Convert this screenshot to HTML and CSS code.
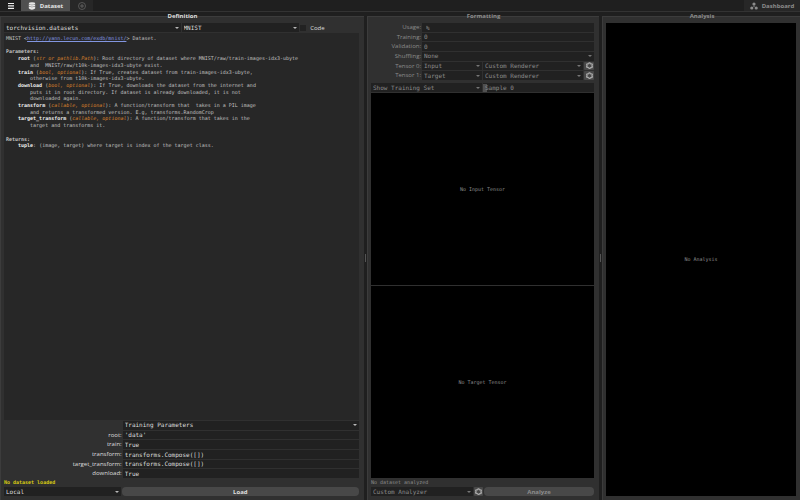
FILE: index.html
```html
<!DOCTYPE html>
<html lang="en">
<head>
<meta charset="utf-8">
<title>Dataset</title>
<link rel="stylesheet" href="styles.css">
</head>
<body>
<svg class="defs" aria-hidden="true">
  <symbol id="gear" viewBox="0 0 12 12">
    <path fill="none" stroke="currentColor" stroke-width="2" stroke-linejoin="round" d="M5 1.500h2l.4 1.300 1.400.7 1.400-.5 1 1.800-1 1v1.200l1 1-1 1.700-1.400-.4-1.400.7L7 11H5l-.4-1.200-1.400-.7-1.400.4-1-1.700 1-1V5.700l-1-1L1.800 3l1.400.5 1.400-.7z"/>
  </symbol>
</svg>

<header class="topbar">
  <button class="menu" type="button" aria-label="Menu">
    <svg viewBox="0 0 8 8"><path d="M1 1.500h6M1 3.900h6M1 6.300h6" stroke="currentColor" stroke-width="1.200"/></svg>
  </button>
  <button class="tab tab-active" type="button">
    <svg viewBox="0 0 8 8"><ellipse cx="4" cy="1.500" rx="3.200" ry="1.300"/><path d="M.8 2.300c1 1.200 5.400 1.200 6.400 0v1.400c-1 1.300-5.400 1.300-6.400 0zM.8 4.300c1 1.200 5.400 1.200 6.400 0v2c-1 1.900-5.400 1.900-6.400 0z"/></svg>
    Dataset
  </button>
  <button class="tab tab-add" type="button" aria-label="Add tab">
    <svg viewBox="0 0 8 8"><path d="M4 2v4M2 4h4" stroke="currentColor" stroke-width=".8"/><circle cx="4" cy="4" r="3.500" fill="none" stroke="currentColor" stroke-width=".7"/></svg>
  </button>
  <button class="tab tab-right" type="button">
    <svg viewBox="0 0 8 8"><circle cx="4" cy="2" r="1.600"/><circle cx="1.800" cy="6" r="1.600"/><circle cx="6.200" cy="6" r="1.600"/><path d="M4 2v2L2 6M4 4l2 2" fill="none" stroke="currentColor" stroke-width=".5"/></svg>
    Dashboard
  </button>
</header>

<main class="workspace">
  <section class="panel">
    <h2 class="title">Definition</h2>
    <div class="row pick">
      <span class="combo"><select aria-label="Module"><option>torchvision.datasets</option></select></span>
      <span class="combo"><select aria-label="Dataset"><option>MNIST</option></select></span>
      <label class="check"><input type="checkbox">Code</label>
    </div>
    <div class="doc">
      <div class="lines">
        <p>MNIST &lt;<a href="#">http://yann.lecun.com/exdb/mnist/</a>&gt; Dataset.</p>
        <p></p>
        <p><b class="head">Parameters:</b></p>
        <p>    <b>root</b> (<i>str or pathlib.Path</i>): Root directory of dataset where MNIST/raw/train-images-idx3-ubyte</p>
        <p>        and  MNIST/raw/t10k-images-idx3-ubyte exist.</p>
        <p>    <b>train</b> (<i>bool, optional</i>): If True, creates dataset from train-images-idx3-ubyte,</p>
        <p>        otherwise from t10k-images-idx3-ubyte.</p>
        <p>    <b>download</b> (<i>bool, optional</i>): If True, downloads the dataset from the internet and</p>
        <p>        puts it in root directory. If dataset is already downloaded, it is not</p>
        <p>        downloaded again.</p>
        <p>    <b>transform</b> (<i>callable, optional</i>): A function/transform that  takes in a PIL image</p>
        <p>        and returns a transformed version. E.g, transforms.RandomCrop</p>
        <p>    <b>target_transform</b> (<i>callable, optional</i>): A function/transform that takes in the</p>
        <p>        target and transforms it.</p>
        <p></p>
        <p><b class="head">Returns:</b></p>
        <p>    <b>tuple</b>: (image, target) where target is index of the target class.</p>
      </div>
    </div>
    <div class="params">
      <span></span>
      <span class="combo"><select aria-label="Parameter group"><option>Training Parameters</option></select></span>
      <label for="root">root:</label><input id="root" type="text" value="'data'">
      <label for="train">train:</label><input id="train" type="text" value="True">
      <label for="transform">transform:</label><input id="transform" type="text" value="transforms.Compose([])">
      <label for="target">target_transform:</label><input id="target" type="text" value="transforms.Compose([])">
      <label for="download">download:</label><input id="download" type="text" value="True">
    </div>
    <p class="status warn">No dataset loaded</p>
    <div class="row load">
      <span class="combo"><select aria-label="Location"><option>Local</option></select></span>
      <button class="action" type="button">Load</button>
    </div>
  </section>

  <div class="splitter"></div>

  <section class="panel dim">
    <h2 class="title">Formatting</h2>
    <div class="format">
      <label for="usage">Usage:</label><input id="usage" class="indent" type="text" value="%">
      <label for="training">Training:</label><input id="training" type="text" value="0">
      <label for="validation">Validation:</label><input id="validation" type="text" value="0">
      <label for="shuffling">Shuffling:</label>
      <span class="combo"><select id="shuffling"><option>None</option></select></span>
      <label for="tensor0">Tensor 0:</label>
      <div class="row tensor">
        <span class="combo"><select id="tensor0"><option>Input</option></select></span>
        <span class="combo"><select aria-label="Tensor 0 renderer"><option>Custom Renderer</option></select></span>
        <button class="gear" type="button" aria-label="Tensor 0 settings"><svg><use href="#gear"/></svg></button>
      </div>
      <label for="tensor1">Tensor 1:</label>
      <div class="row tensor">
        <span class="combo"><select id="tensor1"><option>Target</option></select></span>
        <span class="combo"><select aria-label="Tensor 1 renderer"><option>Custom Renderer</option></select></span>
        <button class="gear" type="button" aria-label="Tensor 1 settings"><svg><use href="#gear"/></svg></button>
      </div>
    </div>
    <div class="row halves">
      <span class="combo"><select aria-label="Shown set"><option>Show Training Set</option></select></span>
      <div class="slider"><input id="sample" type="range" min="0" max="100" value="0"><label for="sample">Sample 0</label></div>
    </div>
    <div class="views">
      <div class="view">No Input Tensor</div>
      <div class="view">No Target Tensor</div>
    </div>
    <p class="status">No dataset analyzed</p>
    <div class="row analyze">
      <span class="combo"><select aria-label="Analyzer"><option>Custom Analyzer</option></select></span>
      <button class="gear" type="button" aria-label="Analyzer settings"><svg><use href="#gear"/></svg></button>
      <button class="action" type="button">Analyze</button>
    </div>
  </section>

  <div class="splitter"></div>

  <section class="panel dim">
    <h2 class="title">Analysis</h2>
    <div class="views"><div class="view">No Analysis</div></div>
  </section>
</main>
</body>
</html>
```
FILE: styles.css
```css
:root {
  --mono: "DejaVu Sans Mono", "Liberation Mono", monospace;
  --sans: "Open Sans", "Noto Sans", sans-serif;
  --text: #dedede;
  --muted: #8c8c8c;
  --field: #212121;
  --panel: #303030;
}

* { box-sizing: border-box; }

body {
  margin: 0;
  height: 100vh;
  display: flex;
  flex-direction: column;
  overflow: hidden;
  background: #1f1f1f;
  color: var(--text);
  font: 6px/8px var(--sans);
}

p, h2 { margin: 0; }
.defs { display: none; }

button, input, select {
  margin: 0;
  padding: 0;
  border: 0;
  border-radius: 0;
  outline: 0;
  min-width: 0;
  color: inherit;
  font: inherit;
}

/* Top bar */
.topbar {
  display: flex;
  height: 12px;
  flex: none;
  border-bottom: 1px solid #333;
}

.topbar button {
  display: flex;
  align-items: center;
  justify-content: center;
  gap: 4px;
  background: none;
}

.topbar svg { width: 8px; height: 8px; fill: currentColor; }
.topbar .menu { width: 21px; color: #f0f0f0; }
.topbar .tab { background: #272727; font-weight: 700; }
.topbar .tab-active { width: 49px; background: #505050; color: #e6e6e6; }
.topbar .tab-add { width: 23px; color: #6a6a6a; }
.topbar .tab-right { width: 56px; margin-left: auto; color: #8c8c8c; }

/* Panels */
.workspace {
  flex: 1;
  min-height: 0;
  display: grid;
  grid-template-columns: 364fr 3px 232fr 3px 198fr;
  padding-top: 4px;
}

.panel {
  min-width: 0;
  min-height: 0;
  display: flex;
  flex-direction: column;
  padding: 0 5px 4px 3px;
  background: var(--panel);
  border-top: 1px solid #3c3c3c;
  border-left: 1px solid #3c3c3c;
}

.panel:last-child { padding-right: 4px; }

.dim { color: var(--muted); }

.title {
  height: 6px;
  flex: none;
  margin: -5px -2px 5px 0;
  text-align: center;
  font-size: 6px;
  line-height: 8px;
  font-weight: 700;
}

.splitter {
  display: flex;
  align-items: center;
  justify-content: center;
  background: #1f1f1f;
}

.splitter::after {
  content: "";
  width: 1px;
  height: 8px;
  background: #555;
}

/* Fields */
.row { display: grid; gap: 1px; height: 9px; flex: none; }
.combo { position: relative; display: grid; min-width: 0; background: var(--field); }

.combo::after {
  content: "";
  position: absolute;
  right: 2px;
  top: 50%;
  margin-top: -1px;
  border: 2px solid transparent;
  border-top-color: currentColor;
  border-bottom: 0;
  opacity: .8;
  pointer-events: none;
}

select, input[type="text"] {
  appearance: none;
  width: 100%;
  height: 100%;
  min-height: 0;
  padding-left: 2px;
  background: var(--field);
  font-family: var(--mono);
  line-height: 8px;
}

input[type="text"].indent { padding-left: 4px; }

.action {
  border-radius: 4px;
  background: #484848;
  font-weight: 700;
}

.gear {
  display: grid;
  place-items: center;
  border-radius: 1px;
  background: #484848;
  color: #a8a8a8;
}

.gear svg { width: 7px; height: 7px; }

.status {
  flex: none;
  height: 9px;
  font: 5px/8px var(--mono);
}

.warn { color: #d8cb10; font-weight: 700; }

/* Definition */
.pick { grid-template-columns: 177fr 118fr 59fr; height: 10px; padding-bottom: 1px; }
.check { display: flex; align-items: center; gap: 4px; }

.check input {
  appearance: none;
  width: 6px;
  height: 6px;
  background: #222;
}

.doc {
  flex: 1;
  min-height: 0;
  padding: 2px;
  background: #272727;
  color: #c0c0c0;
  font: 5px/7px var(--mono);
}

.lines { display: grid; grid-template-rows: repeat(17, minmax(0, 1fr)); height: 114px; }
.lines p { white-space: pre; }
.lines b { color: #f0f0f0; }
.lines .head { color: #c0c0c0; }
.lines i { color: #d8802c; }
.lines a { color: #8296e0; }

.params {
  flex: none;
  display: grid;
  grid-template-columns: 118fr 237fr;
  grid-template-rows: repeat(6, minmax(0, 1fr));
  gap: 1px;
  height: 57px;
  margin-top: 1px;
}

.params label, .format label { text-align: right; white-space: nowrap; }
.load { grid-template-columns: 117fr 238fr; }

/* Formatting */
.format {
  flex: none;
  display: grid;
  grid-template-columns: 50fr 172fr;
  grid-template-rows: repeat(6, minmax(0, 1fr));
  gap: 1px;
  height: 57px;
}

.tensor { grid-template-columns: 60fr 100fr 10px; height: 100%; }
.halves { grid-template-columns: 111fr 111fr; margin: 3px 0 1px; height: 9px; }
.analyze { grid-template-columns: 102fr 9px 110fr; }

.slider { position: relative; display: grid; background: var(--field); }

.slider input {
  appearance: none;
  width: 100%;
  height: 100%;
  background: none;
}

.slider input::-webkit-slider-thumb {
  appearance: none;
  width: 4px;
  height: 8px;
  background: #505050;
}

.slider label {
  position: absolute;
  inset: 0;
  padding-left: 2px;
  font-family: var(--mono);
  line-height: 9px;
  pointer-events: none;
}

.views { flex: 1; min-height: 0; display: grid; gap: 1px; }

.view {
  display: grid;
  place-items: center;
  background: #000;
  font: 5px/7px var(--mono);
}
```
